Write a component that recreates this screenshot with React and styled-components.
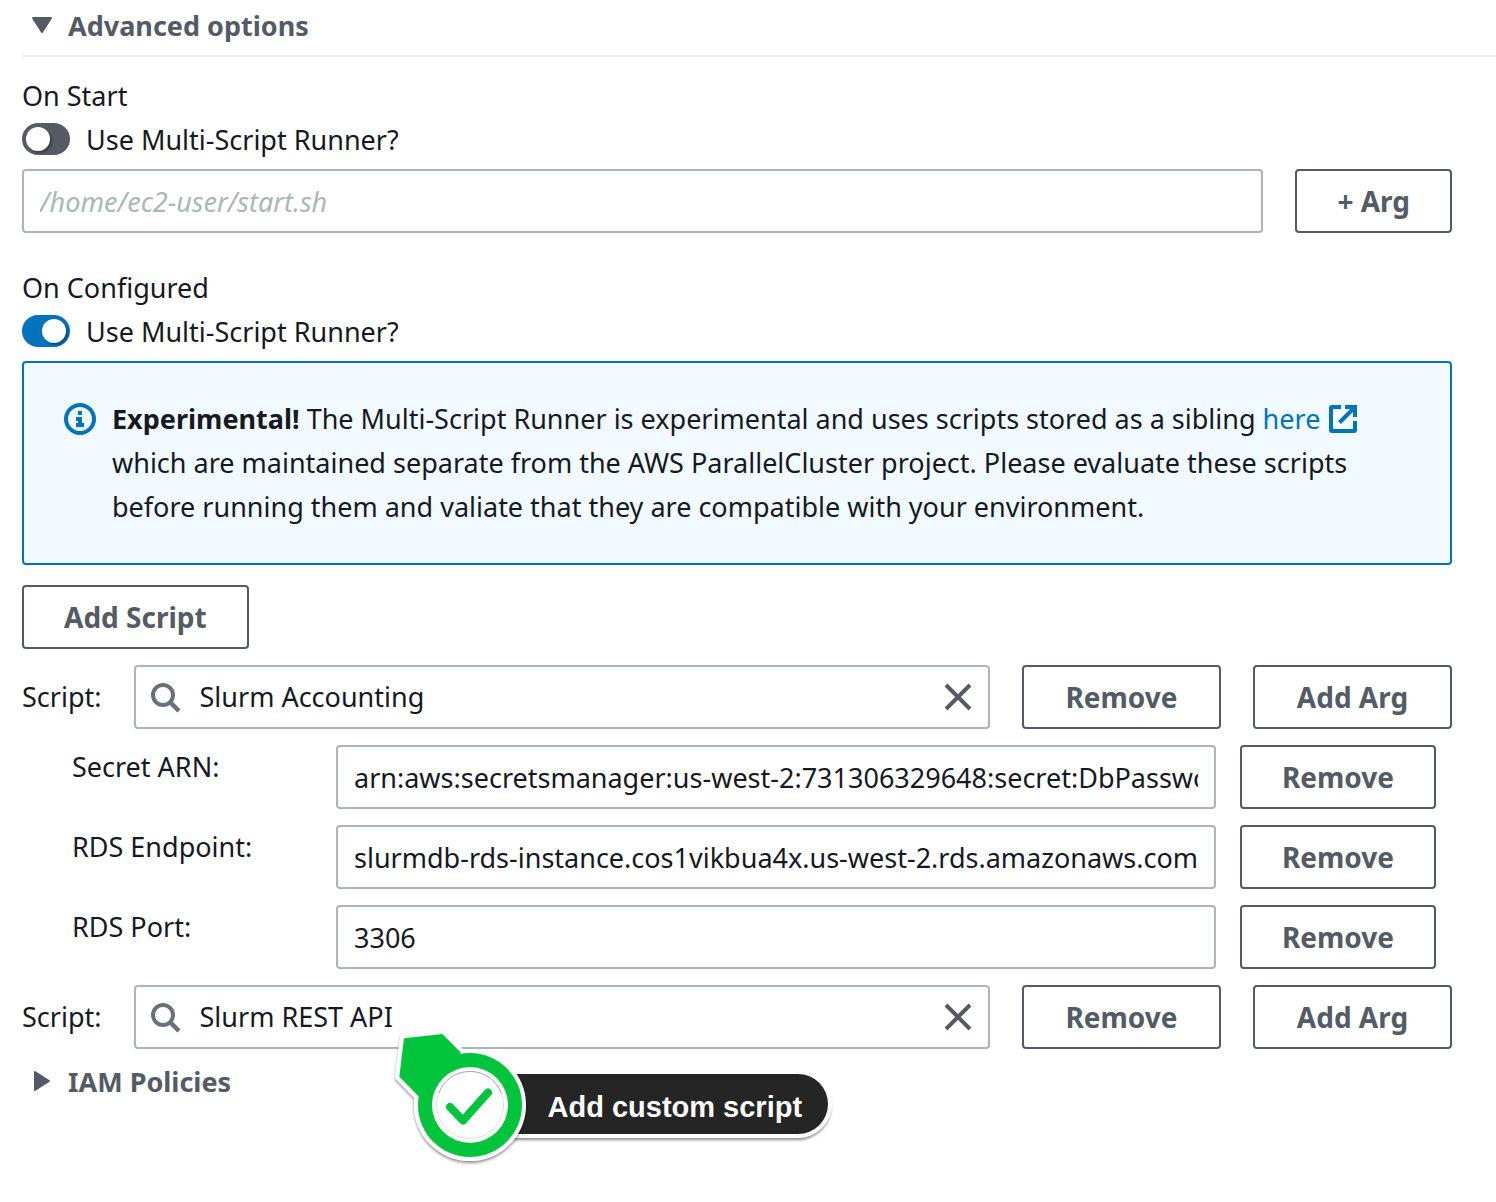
import React, { useState } from "react";
import styled, { createGlobalStyle } from "styled-components";

const GlobalStyle = createGlobalStyle`
  *, *::before, *::after { box-sizing: border-box; }
  body {
    margin: 0;
    background: #fff;
    color: #16191f;
    font-family: "Noto Sans", "Open Sans", sans-serif;
    font-size: 27px;
    line-height: 44px;
  }
  button, input { font: inherit; color: inherit; }
  svg { display: block; flex: none; overflow: visible; }
`;

const Page = styled.main`
  min-height: 100vh;
  padding: 4px 0 32px 22px;
`;

const SectionHeader = styled.header`
  padding-bottom: 7px;
  border-bottom: 2px solid #eaeded;
`;

const Heading = styled.h2`
  margin: 0;
  font-size: 27px;
  line-height: 44px;
`;

const Disclosure = styled.button`
  display: flex;
  align-items: center;
  gap: 16px;
  padding: 0 0 0 8px;
  border: 0;
  background: none;
  color: #545b64;
  font-weight: 700;
  cursor: pointer;
`;

const Content = styled.div`
  padding: 17px 44px 0 0;
`;

const Group = styled.section`
  margin-bottom: 33px;
`;

const Title = styled.div`
  line-height: 44px;
`;

const ToggleLabel = styled.label`
  display: flex;
  align-items: center;
  gap: 16px;
  width: fit-content;
  margin-bottom: 7px;
  cursor: pointer;
`;

const Toggle = styled.input`
  appearance: none;
  display: flex;
  align-items: center;
  width: 48px;
  height: 32px;
  margin: 0 0 2px;
  padding: 0 4px;
  border-radius: 16px;
  background: #545b64;
  cursor: pointer;

  &::before {
    content: "";
    width: 24px;
    height: 24px;
    border-radius: 50%;
    background: #fff;
    box-shadow: 2px 2px 2px rgba(0, 0, 0, 0.3);
  }

  &:checked {
    justify-content: flex-end;
    background: #0073bb;
  }
`;

const Row = styled.div`
  display: flex;
  align-items: center;
  gap: 32px;
`;

const TextInput = styled.input`
  flex: 1;
  width: 100%;
  min-width: 0;
  height: 64px;
  padding: 0 16px;
  border: 2px solid #aab7b8;
  border-radius: 4px;
  background: #fff;
  outline: none;

  &::placeholder {
    color: #aab7b8;
    font-style: italic;
    opacity: 1;
  }
`;

const Button = styled.button`
  height: 64px;
  padding: 0 40px;
  border: 2px solid #545b64;
  border-radius: 4px;
  background: #fff;
  color: #545b64;
  font-size: 28px;
  font-weight: 700;
  white-space: nowrap;
  cursor: pointer;
`;

const Alert = styled.div`
  display: flex;
  align-items: flex-start;
  gap: 16px;
  margin-bottom: 20px;
  padding: 34px 40px;
  border: 2px solid #0073bb;
  border-radius: 4px;
  background: #f1faff;
`;

const AlertIcon = styled.span`
  display: flex;
  align-items: center;
  height: 44px;
`;

const AlertText = styled.p`
  margin: 0;
`;

const Link = styled.a`
  color: #0073bb;
  text-decoration: none;
  white-space: nowrap;

  svg {
    display: inline-block;
    margin-left: 8px;
    vertical-align: -4px;
  }
`;

const Scripts = styled.div`
  display: grid;
  gap: 16px;
  margin-top: 16px;
`;

const SearchField = styled.div`
  position: relative;
  display: flex;
  align-items: center;
  flex: 1;
  min-width: 0;
  height: 64px;
  padding: 0 16px;
  border: 2px solid #aab7b8;
  border-radius: 4px;
`;

const SearchInput = styled.input`
  flex: 1;
  min-width: 0;
  padding: 0 16px;
  border: 0;
  background: none;
  outline: none;
`;

const ClearButton = styled.button`
  display: flex;
  padding: 0;
  border: 0;
  background: none;
  cursor: pointer;
`;

const Actions = styled.div`
  display: grid;
  grid-template-columns: 1fr 1fr;
  gap: 32px;
  flex: 0 0 430px;
`;

const ArgRow = styled.div`
  display: grid;
  grid-template-columns: 240px 1fr auto;
  gap: 24px;
  padding: 0 16px 0 50px;
`;

const Policies = styled.div`
  margin-top: 11px;
`;

const Callout = styled.div`
  position: absolute;
  left: 254px;
  top: 39px;
  z-index: 1;
  display: flex;
  align-items: flex-start;
  pointer-events: none;

  svg { position: relative; z-index: 1; }
`;

const CalloutText = styled.span`
  margin: 48px 0 0 -60px;
  padding: 3px 26px 0 78px;
  height: 60px;
  border-radius: 0 30px 30px 0;
  background: #252525;
  box-shadow: 0 0 0 4px #fff, 0 3px 3px 3px rgba(0, 0, 0, 0.45);
  color: #fff;
  font: 700 29px/60px "Liberation Sans", Arial, sans-serif;
  white-space: nowrap;
`;

function Caret({ open }) {
  return (
    <svg width="22" height="24" viewBox="0 0 22 24" aria-hidden="true">
      <path
        d={open ? "M3 4H21L12 18Z" : "M5 2V20L19 11Z"}
        fill="#545b64"
        stroke="#545b64"
        strokeWidth="2"
        strokeLinejoin="round"
      />
    </svg>
  );
}

function InfoIcon() {
  return (
    <svg width="32" height="32" viewBox="0 0 32 32" aria-hidden="true">
      <circle cx="16" cy="16" r="14" fill="none" stroke="#0073bb" strokeWidth="4" />
      <path d="M14 8h4v4h-4zM12 14h6v6h2v4h-8v-4h2v-2h-2z" fill="#0073bb" />
    </svg>
  );
}

function ExternalIcon() {
  return (
    <svg width="30" height="28" viewBox="-1 0 30 28" aria-hidden="true">
      <path
        d="M12 2H3Q2 2 2 3V25Q2 26 3 26H25Q26 26 26 25V16M16 2H26V12M25 3L10.500 17.500"
        fill="none"
        stroke="#0073bb"
        strokeWidth="4"
      />
    </svg>
  );
}

function SearchIcon() {
  return (
    <svg width="32" height="32" viewBox="0 0 32 32" aria-hidden="true">
      <circle cx="11" cy="14" r="10" fill="none" stroke="#687078" strokeWidth="4" />
      <path d="M18 21L27 30" stroke="#687078" strokeWidth="4.500" />
    </svg>
  );
}

function CloseIcon() {
  return (
    <svg width="28" height="32" viewBox="0 0 28 32" aria-hidden="true">
      <path d="M2 4L26 28M26 4L2 28" stroke="#545b64" strokeWidth="4" />
    </svg>
  );
}

function CheckMarker() {
  const pointer = "M14 12.300L52.300 8L71 26.700L29 70.700L9.300 50.700Z";
  return (
    <svg width="140" height="144" viewBox="0 0 140 144" aria-hidden="true">
      <defs>
        <filter id="marker-shadow" x="-10%" y="-10%" width="120%" height="120%">
          <feDropShadow dx="0" dy="2" stdDeviation="1.500" floodColor="#000" floodOpacity="0.450" />
        </filter>
      </defs>
      <g filter="url(#marker-shadow)">
        <path d={pointer} fill="#fff" stroke="#fff" strokeWidth="8" />
        <circle cx="80" cy="79" r="56" fill="#fff" />
      </g>
      <path d={pointer} fill="#00c53c" />
      <circle cx="80" cy="79" r="52" fill="#00c53c" />
      <circle cx="80" cy="79" r="38" fill="#fff" />
      <circle cx="80" cy="79" r="33.500" fill="none" stroke="#e2e2e2" strokeWidth="1" />
      <path d="M48.500 67.500A33.500 33.500 0 0 1 111.500 67.500" fill="none" stroke="#b0b0b0" strokeWidth="1" />
      <path
        d="M60 81L73 94.500L98 66.500"
        fill="none"
        stroke="#00c53c"
        strokeWidth="8"
        strokeLinecap="round"
        strokeLinejoin="round"
      />
    </svg>
  );
}

function ScriptRow({ id, value, children }) {
  const [text, setText] = useState(value);
  return (
    <Row>
      <label htmlFor={id}>Script:</label>
      <SearchField>
        <SearchIcon />
        <SearchInput id={id} value={text} onChange={(e) => setText(e.target.value)} />
        <ClearButton type="button" aria-label="Clear" onClick={() => setText("")}>
          <CloseIcon />
        </ClearButton>
        {children}
      </SearchField>
      <Actions>
        <Button type="button">Remove</Button>
        <Button type="button">Add Arg</Button>
      </Actions>
    </Row>
  );
}

const accountingArgs = [
  { id: "secret-arn", label: "Secret ARN:", value: "arn:aws:secretsmanager:us-west-2:731306329648:secret:DbPassword" },
  { id: "rds-endpoint", label: "RDS Endpoint:", value: "slurmdb-rds-instance.cos1vikbua4x.us-west-2.rds.amazonaws.com" },
  { id: "rds-port", label: "RDS Port:", value: "3306" },
];

export default function App() {
  return (
    <>
      <GlobalStyle />
      <Page>
        <SectionHeader>
          <Heading>
            <Disclosure type="button" aria-expanded="true">
              <Caret open />
              Advanced options
            </Disclosure>
          </Heading>
        </SectionHeader>
        <Content>
          <Group>
            <Title>On Start</Title>
            <ToggleLabel>
              <Toggle type="checkbox" role="switch" />
              Use Multi-Script Runner?
            </ToggleLabel>
            <Row>
              <TextInput aria-label="On Start" placeholder="/home/ec2-user/start.sh" />
              <Button type="button">+ Arg</Button>
            </Row>
          </Group>

          <Title>On Configured</Title>
          <ToggleLabel>
            <Toggle type="checkbox" role="switch" defaultChecked />
            Use Multi-Script Runner?
          </ToggleLabel>
          <Alert>
            <AlertIcon>
              <InfoIcon />
            </AlertIcon>
            <AlertText>
              <b>Experimental!</b> The Multi-Script Runner is experimental and uses scripts stored as a sibling{" "}
              <Link href="#scripts">
                here
                <ExternalIcon />
              </Link>{" "}
              which are maintained separate from the AWS ParallelCluster project. Please evaluate these scripts
              before running them and valiate that they are compatible with your environment.
            </AlertText>
          </Alert>
          <Button type="button">Add Script</Button>

          <Scripts id="scripts">
            <ScriptRow id="script-accounting" value="Slurm Accounting" />
            {accountingArgs.map((arg) => (
              <ArgRow key={arg.id}>
                <label htmlFor={arg.id}>{arg.label}</label>
                <TextInput id={arg.id} defaultValue={arg.value} />
                <Button type="button">Remove</Button>
              </ArgRow>
            ))}
            <ScriptRow id="script-rest" value="Slurm REST API">
              <Callout>
                <CheckMarker />
                <CalloutText>Add custom script</CalloutText>
              </Callout>
            </ScriptRow>
          </Scripts>

          <Policies>
            <Heading>
              <Disclosure type="button" aria-expanded="false">
                <Caret />
                IAM Policies
              </Disclosure>
            </Heading>
          </Policies>
        </Content>
      </Page>
    </>
  );
}
